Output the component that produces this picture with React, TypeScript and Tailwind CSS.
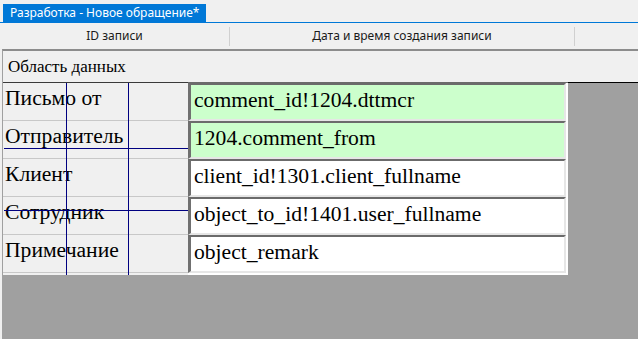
const rows = [
  { label: "Письмо от", value: "comment_id!1204.dttmcr", green: true },
  { label: "Отправитель", value: "1204.comment_from", green: true },
  { label: "Клиент", value: "client_id!1301.client_fullname", green: false },
  { label: "Сотрудник", value: "object_to_id!1401.user_fullname", green: false },
  { label: "Примечание", value: "object_remark", green: false },
];

export default function App() {
  return (
    <div className="flex h-[339px] w-[638px] flex-col overflow-hidden bg-[#f0f0f0] text-black">
      {/* tabs */}
      <div className="flex h-[23px] shrink-0 border-b border-[#0078d7] pt-[4px] pl-[3px]">
        <div className="bg-[#0078d7] px-[7px] [font-family:'Noto_Sans',sans-serif] text-[12px] leading-[18px] text-white">
          Разработка - Новое обращение*
        </div>
      </div>

      {/* column header */}
      <div className="flex h-[26px] shrink-0 items-center [font-family:'Noto_Sans',sans-serif] text-[12px] text-[#1a1a1a]">
        <div className="w-[229px] text-center">ID записи</div>
        <div className="h-[19px] w-px bg-[#d0d0d0]" />
        <div className="w-[344px] text-center">Дата и время создания записи</div>
        <div className="h-[19px] w-px bg-[#d0d0d0]" />
      </div>

      {/* data area */}
      <div className="ml-[2px] flex flex-1 flex-col border-t-2 border-l border-t-[#8c8c8c] border-l-[#a0a0a0] [font-family:'Liberation_Serif','Times_New_Roman','DejaVu_Serif',serif]">
        <div className="flex h-[31px] shrink-0 items-center pl-[5px] text-[17px]">Область данных</div>

        <div className="flex flex-1 flex-col bg-[#a0a0a0]">
          <div className="flex">
            <div className="relative w-[185px] border-t border-[#3a3a3a] bg-[#f0f0f0]">
              {rows.map((r) => (
                <div key={r.label} className="h-[38px] border-b border-[#c8c8c8] pt-[3px] pl-[2px] text-[21.6px] leading-[24px]">
                  {r.label}
                </div>
              ))}
              <div className="absolute top-0 bottom-0 left-[63px] w-px bg-[#000080]" />
              <div className="absolute top-0 bottom-0 left-[125px] w-px bg-[#000080]" />
              <div className="absolute top-[65px] right-0 left-[1px] h-px bg-[#000080]" />
              <div className="absolute top-[127px] right-0 left-[1px] h-px bg-[#000080]" />
            </div>

            <div className="w-[380px] border-t border-[#6b6b6b] bg-white pr-[2px] pb-[2px]">
              {rows.map((r) => (
                <div
                  key={r.value}
                  className={`h-[38px] border-t-2 border-r-2 border-b-2 border-l-[3px] border-t-[#6b6b6b] border-r-[#e6e6e6] border-b-[#e6e6e6] border-l-[#707070] pt-[3px] pl-[3px] text-[21.6px] leading-[24px] ${
                    r.green ? "bg-[#ccffcc]" : "bg-white"
                  }`}
                >
                  {r.value}
                </div>
              ))}
            </div>

            <div className="flex-1 border-t border-black" />
          </div>
        </div>
      </div>
    </div>
  );
}
